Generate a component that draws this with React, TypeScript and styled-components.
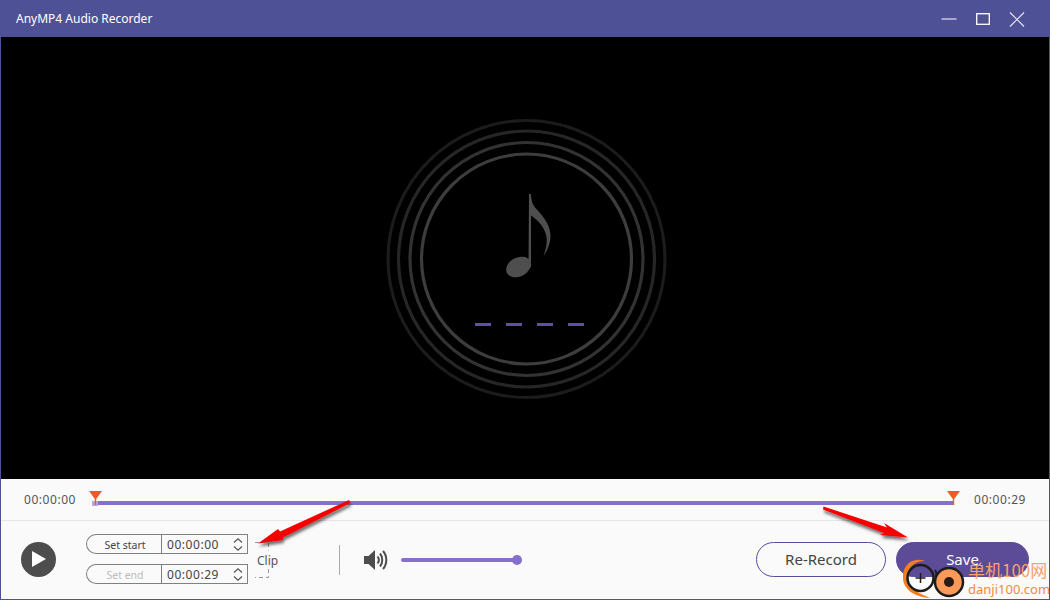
import React from 'react';
import styled, { createGlobalStyle } from 'styled-components';

const GlobalStyle = createGlobalStyle`
  html, body {
    margin: 0;
    padding: 0;
    background: #fafafa;
  }
  * {
    box-sizing: border-box;
  }
`;

const Window = styled.div`
  position: relative;
  width: 1050px;
  height: 600px;
  display: flex;
  flex-direction: column;
  overflow: hidden;
  background: #fafafa;
  border: 1px solid #4f5196;
  border-top: 0;
  font-family: 'Noto Sans', 'Open Sans', sans-serif;
  color: #444;
`;

const TitleBar = styled.header`
  height: 37px;
  flex: none;
  margin: 0 -1px;
  padding: 0 25px 0 16px;
  display: flex;
  align-items: center;
  justify-content: space-between;
  background: #4f5196;
  color: #fff;
`;

const Title = styled.span`
  font-size: 12px;
  line-height: 39px;
`;

const WindowButtons = styled.div`
  display: flex;
  align-items: center;
  gap: 19px;
  padding-top: 1px;
`;

const Stage = styled.main`
  height: 442px;
  flex: none;
  display: flex;
  align-items: center;
  justify-content: center;
  background: #000;
`;

const TimelineRow = styled.section`
  height: 42px;
  flex: none;
  padding: 0 23px;
  display: flex;
  align-items: center;
  justify-content: space-between;
  border-bottom: 1px solid #e6e6e6;
`;

const TimeLabel = styled.span`
  font-size: 12px;
  line-height: 40px;
  color: #555;
  letter-spacing: 0.55px;
`;

const Track = styled.div`
  position: relative;
  width: 862px;
  height: 4px;
  margin: 7px 4px 0 0;
  background: #8570cc;
`;

const StartCap = styled.span`
  position: absolute;
  left: 0;
  top: 0;
  width: 6px;
  height: 5px;
  background: #b6a8e6;
`;

const Handle = styled.svg<{ $side: 'start' | 'end' }>`
  position: absolute;
  top: -10px;
  ${p => (p.$side === 'start' ? 'left: -3.5px;' : 'right: -5.5px;')}
`;

const ControlRow = styled.section`
  flex: 1;
  display: flex;
  align-items: center;
  padding: 0 20px 2px 20px;
`;

const PlayButton = styled.button`
  width: 35px;
  height: 35px;
  flex: none;
  padding: 0;
  border: 0;
  border-radius: 50%;
  display: flex;
  align-items: center;
  justify-content: center;
  background: #4d4d4d;
`;

const ClipFields = styled.div`
  margin-left: 30px;
  display: flex;
  flex-direction: column;
  gap: 10px;
`;

const FieldRow = styled.div`
  display: flex;
  height: 20px;
`;

const SetButton = styled.span<{ $muted?: boolean }>`
  width: 75px;
  padding-left: 2px;
  border: 1px solid #808080;
  border-right: 0;
  border-radius: 10px 0 0 10px;
  text-align: center;
  font-size: 10.5px;
  line-height: 20px;
  color: ${p => (p.$muted ? '#bbb' : '#444')};
`;

const TimeBox = styled.span`
  width: 87px;
  padding: 0 3px 0 5px;
  display: flex;
  align-items: center;
  justify-content: space-between;
  border: 1px solid #808080;
  font-size: 12px;
  letter-spacing: 0.55px;
  color: #444;
`;

const ClipLabel = styled.div`
  position: relative;
  width: 21px;
  height: 36px;
  margin: 2px 0 0 9px;
  font-size: 12px;
  line-height: 37px;
  color: #555;
`;

const ClipBracket = styled.svg`
  position: absolute;
  left: -3px;
  top: 0;
`;

const Divider = styled.span`
  width: 1px;
  height: 30px;
  margin: 2px 0 0 61px;
  background: #aaa;
`;

const VolumeGroup = styled.div`
  margin: 2px 0 0 24px;
  display: flex;
  align-items: center;
  gap: 12px;
`;

const VolumeTrack = styled.div`
  position: relative;
  width: 120px;
  height: 4px;
  border-radius: 2px;
  background: #8570cc;
`;

const VolumeThumb = styled.span`
  position: absolute;
  right: -1px;
  top: -3px;
  width: 10px;
  height: 10px;
  border-radius: 50%;
  background: #8570cc;
`;

const Actions = styled.div`
  margin-left: auto;
  display: flex;
  gap: 10px;
`;

const ActionButton = styled.button<{ $primary?: boolean }>`
  width: ${p => (p.$primary ? '133px' : '130px')};
  height: 35px;
  padding: 0;
  border-radius: 18px;
  border: 1px solid #5c4c98;
  background: ${p => (p.$primary ? '#5c4c98' : 'transparent')};
  color: ${p => (p.$primary ? '#fff' : '#444')};
  font-family: inherit;
  font-size: 15px;
`;

const ArrowsOverlay = styled.svg`
  position: absolute;
  left: -1px;
  top: 0;
  pointer-events: none;
`;

const Watermark = styled.div`
  position: absolute;
  left: 898px;
  top: 555px;
  display: flex;
  align-items: flex-start;
  gap: 2px;
`;

const WatermarkText = styled.div`
  display: flex;
  flex-direction: column;
  align-items: flex-start;
  margin-top: 3px;
  white-space: nowrap;
`;

const WatermarkName = styled.span`
  font-family: 'Noto Sans CJK SC', 'Noto Sans', sans-serif;
  font-size: 17px;
  line-height: 24px;
  color: #f9a26c;
`;

const WatermarkSite = styled.span`
  font-family: 'Noto Sans', sans-serif;
  font-size: 13px;
  line-height: 15px;
  color: #ef8a3c;
`;

const Stepper = () => (
  <svg width="12" height="15" viewBox="0 0 12 15" fill="none" stroke="#555" strokeWidth="1.2">
    <path d="M2 5.5 6 1.8l4 3.7M2 9.5l4 3.700 4-3.700" />
  </svg>
);

const rings = [
  { r: 105, color: '#3e3e3e' },
  { r: 116.5, color: '#323232' },
  { r: 128, color: '#262626' },
  { r: 138.5, color: '#1a1a1a' },
];

const dashes = [100, 131, 162, 193];

const RecordDisc = () => (
  <svg width="300" height="300" viewBox="0 0 300 300" fill="none">
    <defs>
      <filter id="ringSoft" x="-5%" y="-5%" width="110%" height="110%">
        <feGaussianBlur stdDeviation="0.6" />
      </filter>
    </defs>
    <g filter="url(#ringSoft)">
      {rings.map(ring => (
        <circle key={ring.r} cx="151.5" cy="151" r={ring.r} stroke={ring.color} strokeWidth="3.2" />
      ))}
    </g>
    <ellipse cx="143.5" cy="159" rx="13" ry="9.5" transform="rotate(-27 143.5 159)" fill="#4e4e4e" />
    <path
      d="M154 86h2c.3 7 1.6 11 5.500 15 8 8.500 14 17 14 27 0 7-3 14-7 20.500 2-7 4-13 3-19.500-1-8-8-17-15.500-21.500V159h-2.500z"
      fill="#4e4e4e"
    />
    {dashes.map(x => (
      <rect key={x} x={x} y="215" width="16" height="3" fill="#5b52a6" />
    ))}
  </svg>
);

const Arrows = () => (
  <ArrowsOverlay width="1050" height="600" viewBox="0 0 1050 600">
    <defs>
      <filter id="arrowShadow" x="-20%" y="-20%" width="140%" height="150%">
        <feDropShadow dx="1" dy="3" stdDeviation="1.500" floodColor="#000" floodOpacity="0.55" />
      </filter>
    </defs>
    <g fill="#f40000" filter="url(#arrowShadow)">
      <path d="M349 500 350.500 503 283 537.500 283 540 258 543.500 278 529 280 531.500z" />
      <path d="M823.500 506.500 823 509.500 884 533 880 535 908 537.500 884 523 887 527.500z" />
    </g>
  </ArrowsOverlay>
);

export default function App() {
  return (
    <Window>
      <GlobalStyle />
      <TitleBar>
        <Title>AnyMP4 Audio Recorder</Title>
        <WindowButtons>
          <svg width="16" height="14" viewBox="0 0 16 14" stroke="#fff" strokeWidth="1" fill="none">
            <path d="M0.500 7h15" />
          </svg>
          <svg width="14" height="12" viewBox="0 0 14 12" stroke="#fff" strokeWidth="1.300" fill="none">
            <rect x="0.700" y="0.700" width="12.600" height="10.600" />
          </svg>
          <svg width="16" height="15" viewBox="0 0 16 15" stroke="#e4e4f2" strokeWidth="1.200" fill="none">
            <path d="M1 .500l14 14M15 .500l-14 14" />
          </svg>
        </WindowButtons>
      </TitleBar>

      <Stage>
        <RecordDisc />
      </Stage>

      <TimelineRow>
        <TimeLabel>00:00:00</TimeLabel>
        <Track>
          <StartCap />
          <Handle $side="start" width="13" height="14" viewBox="0 0 13 14">
            <path d="M0 0h13L7.200 8v6H5.800V8z" fill="#ee5a24" />
          </Handle>
          <Handle $side="end" width="13" height="14" viewBox="0 0 13 14">
            <path d="M0 0h13L7.200 8v6H5.800V8z" fill="#ee5a24" />
          </Handle>
        </Track>
        <TimeLabel>00:00:29</TimeLabel>
      </TimelineRow>

      <ControlRow>
        <PlayButton aria-label="Play">
          <svg width="16" height="18" viewBox="0 0 16 18">
            <path d="M1 1l14 8-14 8z" fill="#fff" />
          </svg>
        </PlayButton>

        <ClipFields>
          <FieldRow>
            <SetButton>Set start</SetButton>
            <TimeBox>
              00:00:00
              <Stepper />
            </TimeBox>
          </FieldRow>
          <FieldRow>
            <SetButton $muted>Set end</SetButton>
            <TimeBox>
              00:00:29
              <Stepper />
            </TimeBox>
          </FieldRow>
        </ClipFields>

        <ClipLabel>
          Clip
          <ClipBracket width="16" height="36" viewBox="0 0 16 36" fill="none" stroke="#999" strokeDasharray="4 3">
            <path d="M1 .500h13.500v8M14.500 27v8.500H1" />
          </ClipBracket>
        </ClipLabel>

        <Divider />

        <VolumeGroup>
          <svg width="25" height="22" viewBox="0 0 25 22" fill="none">
            <path d="M0 7h4.500L11 1v20l-6.500-6H0z" fill="#4d4d4d" />
            <g stroke="#4d4d4d" strokeWidth="2">
              <path d="M13.500 7.500c1.600 2 1.600 5 0 7" />
              <path d="M16 4.500c3 3.500 3 9.500 0 13" />
              <path d="M19 2c4.400 5 4.400 13 0 18" />
            </g>
          </svg>
          <VolumeTrack>
            <VolumeThumb />
          </VolumeTrack>
        </VolumeGroup>

        <Actions>
          <ActionButton>Re-Record</ActionButton>
          <ActionButton $primary>Save</ActionButton>
        </Actions>
      </ControlRow>

      <Arrows />

      <Watermark>
        <svg width="67" height="45" viewBox="0 0 67 45" fill="none">
          <path d="M26 6C12 1 3 12 4 23c0 10 10 19 27 20-11-5-23-10-23-20C8 13 15 6 26 6z" fill="#f57c1f" />
          <circle cx="21.500" cy="23" r="13" stroke="#1c1c1c" strokeWidth="2.500" />
          <path d="M21.500 18v10M16.500 23h10" stroke="#1c1c1c" strokeWidth="1.500" />
          <path d="M36 15c2 3 2 6 1 9" stroke="#1c1c1c" strokeWidth="2" />
          <circle cx="50" cy="27" r="14" fill="#fb9a58" stroke="#1c1c1c" strokeWidth="2.500" />
          <circle cx="50" cy="27" r="5" fill="#2a1a14" />
        </svg>
        <WatermarkText>
          <WatermarkName>单机100网</WatermarkName>
          <WatermarkSite>danji100.com</WatermarkSite>
        </WatermarkText>
      </Watermark>
    </Window>
  );
}
